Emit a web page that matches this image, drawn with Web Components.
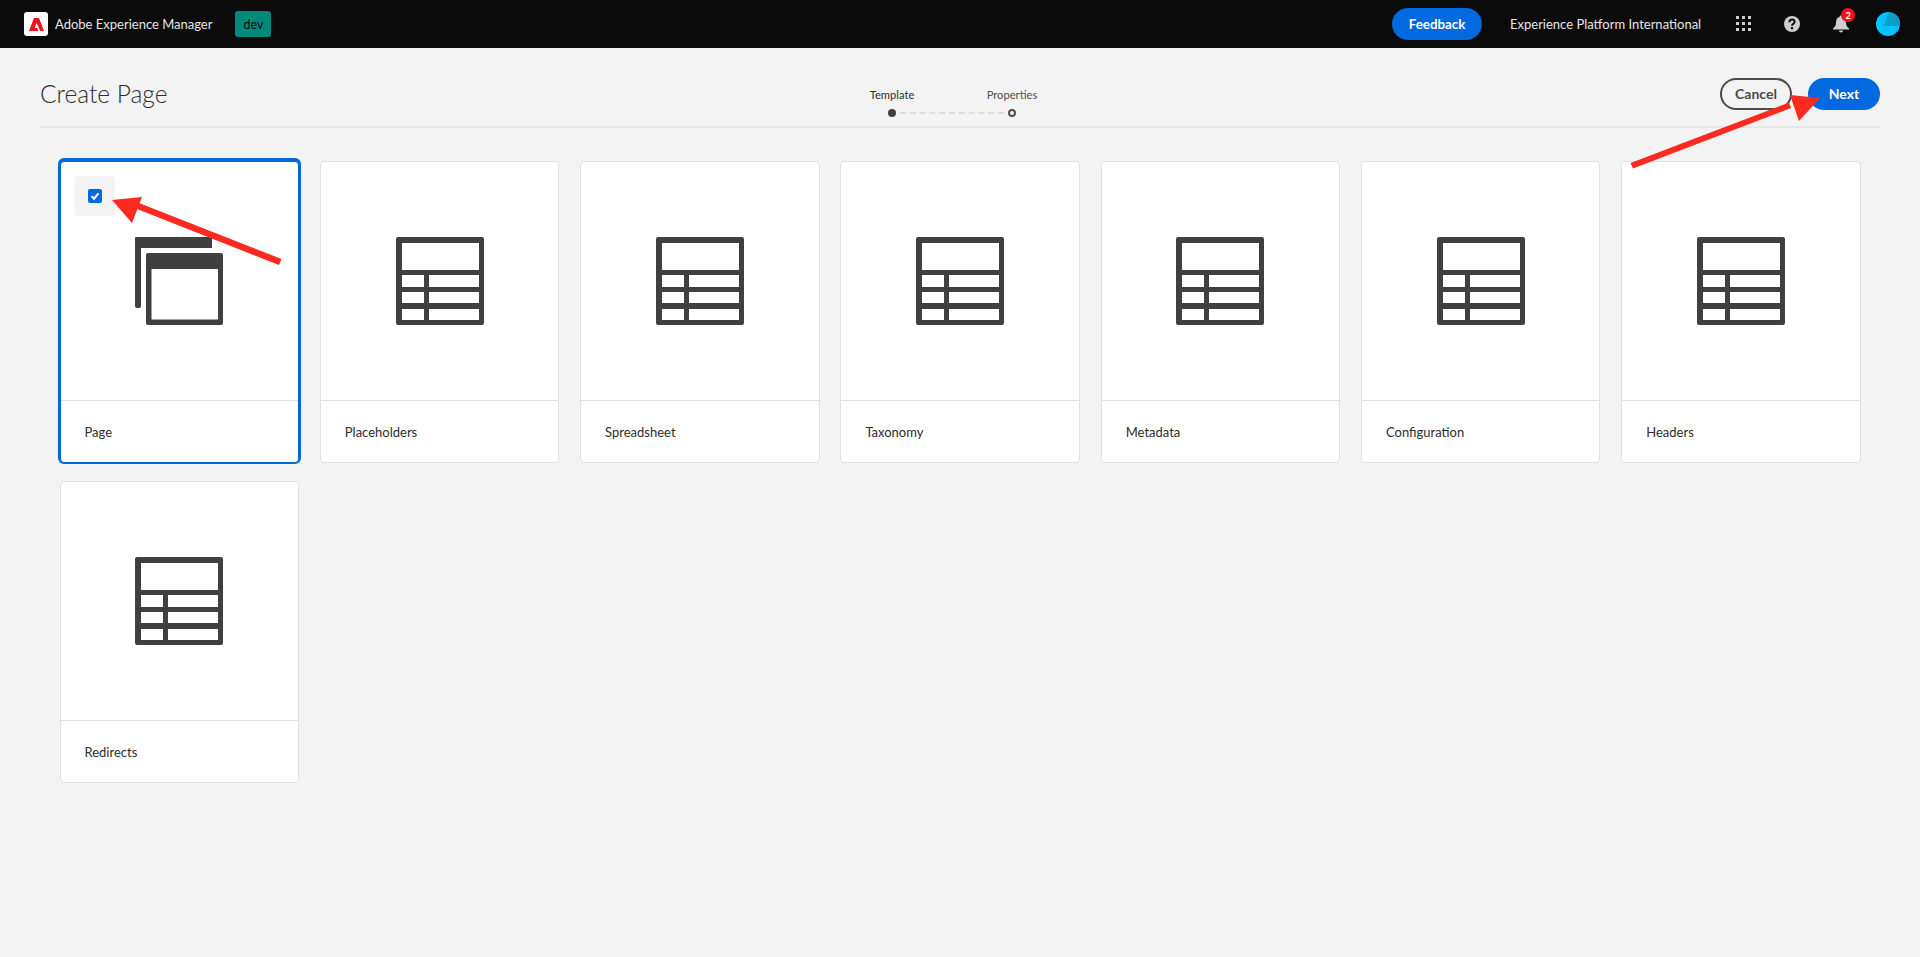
<!DOCTYPE html>
<html lang="en">
<head>
<meta charset="utf-8">
<title>Create Page</title>
<style>
  html, body { margin: 0; padding: 0; height: 100%; background: #f3f3f3; }
  body { font-family: Lato, "Open Sans", sans-serif; overflow: hidden; }
</style>
</head>
<body>

<template id="top-bar-tpl">
  <style>
    :host { display: flex; align-items: center; height: 48px; background: #0b0b0b; color: #e6e6e6; font-size: 13px; white-space: nowrap; }
    .logo { width: 24px; height: 24px; margin-left: 24px; background: #fff; border-radius: 3px; display: flex; align-items: center; justify-content: center; }
    .brand { margin-left: 7px; }
    .env { margin-left: 23px; width: 36px; height: 26px; background: #00897b; border-radius: 3px; color: #0b0b0b; display: flex; align-items: center; justify-content: center; font-size: 12.5px; }
    .spacer { flex: 1; }
    .feedback { width: 90px; height: 32px; background: #0069e0; color: #fff; border-radius: 16px; display: flex; align-items: center; justify-content: center; font-weight: 700; font-size: 13.300px; }
    .org { margin-left: 28px; width: 195px; }
    .apps { margin-left: 31px; width: 16px; height: 16px; }
    .help { margin-left: 32px; width: 16px; height: 16px; }
    .bell-wrap { margin-left: 33px; width: 16px; height: 18px; position: relative; }
    .badge { position: absolute; left: 8px; top: -7px; width: 14px; height: 14px; border-radius: 50%; background: #f01120; color: #fff; font-size: 9px; font-weight: 700; display: flex; align-items: center; justify-content: center; }
    .avatar { margin-left: 27px; margin-right: 20px; width: 24px; height: 24px; }
    svg { display: block; }
  </style>
  <div class="logo">
    <svg width="15" height="13" viewBox="0 0 30 26"><path fill="#f01120" d="M9.900 0H20L30 26H22.500L15.300 9.900L11.300 19.800H16.600L19 26H0Z"/></svg>
  </div>
  <span class="brand">Adobe Experience Manager</span>
  <span class="env">dev</span>
  <span class="spacer"></span>
  <span class="feedback">Feedback</span>
  <span class="org">Experience Platform International</span>
  <svg class="apps" viewBox="0 0 16 16" fill="#d0d0d0">
    <rect x="0" y="0" width="3" height="3"/><rect x="6" y="0" width="3" height="3"/><rect x="12" y="0" width="3" height="3"/>
    <rect x="0" y="6" width="3" height="3"/><rect x="6" y="6" width="3" height="3"/><rect x="12" y="6" width="3" height="3"/>
    <rect x="0" y="12" width="3" height="3"/><rect x="6" y="12" width="3" height="3"/><rect x="12" y="12" width="3" height="3"/>
  </svg>
  <svg class="help" viewBox="0 0 16 16">
    <circle cx="8" cy="8" r="8" fill="#cfcfcf"/>
    <path fill="none" stroke="#0b0b0b" stroke-width="2" d="M5.400 6.200C5.400 4.600 6.600 3.600 8 3.600s2.600 1 2.600 2.400C10.600 7.800 8 7.800 8 9.800"/>
    <rect x="6.900" y="11" width="2.200" height="2.200" fill="#0b0b0b"/>
  </svg>
  <div class="bell-wrap">
    <svg width="16" height="18" viewBox="0 0 16 18" fill="#cfcfcf">
      <path d="M8 0.500C9 0.500 9.500 1.200 9.500 2C12 2.800 13 5 13 7.500C13 10.500 14 12 16 13.500V14.500H0V13.500C2 12 3 10.500 3 7.500C3 5 4 2.800 6.500 2C6.500 1.200 7 0.500 8 0.500Z"/>
      <path d="M6 15.500H10C10 16.800 9 17.500 8 17.500S6 16.800 6 15.500Z"/>
    </svg>
    <span class="badge">2</span>
  </div>
  <svg class="avatar" viewBox="0 0 24 24">
    <circle cx="12" cy="12" r="12" fill="#00c4ff"/>
    <path fill="#0a9cc4" d="M13 0.100A12 12 0 0 1 24 14H7.500Z"/>
  </svg>
</template>

<template id="wizard-stepper-tpl">
  <style>
    :host { display: block; width: 240px; font-size: 11.200px; color: #505050; }
    .labels { display: flex; }
    .labels span { width: 120px; text-align: center; line-height: 16px; }
    .labels .on { color: #2c2c2c; }
    .track { display: flex; align-items: center; margin: 6px 56px 0; }
    .dot { width: 8px; height: 8px; border-radius: 50%; background: #404040; flex: none; }
    .ring { width: 8px; height: 8px; border-radius: 50%; border: 2px solid #505050; box-sizing: border-box; background: #f3f3f3; flex: none; }
    .dash { flex: 1; margin: 0 4px; border-top: 2px dashed #dcdcdc; }
  </style>
  <div class="labels"><span class="on">Template</span><span>Properties</span></div>
  <div class="track"><span class="dot"></span><span class="dash"></span><span class="ring"></span></div>
</template>

<template id="page-header-tpl">
  <style>
    :host { display: grid; grid-template-columns: 792px 240px 1fr; align-items: start; height: 80px; margin: 0 40px; border-bottom: 2px solid #e6e6e6; box-sizing: border-box; }
    h1 { margin: 28px 0 0; font-size: 24.500px; font-weight: 300; line-height: 36px; color: #2c2c2c; }
    wizard-stepper { margin-top: 39px; }
    .actions { display: flex; justify-content: flex-end; gap: 16px; margin-top: 30px; }
    .btn { height: 32px; border-radius: 16px; box-sizing: border-box; display: flex; align-items: center; justify-content: center; font-size: 14px; font-weight: 700; padding-bottom: 2px; }
    .cancel { width: 72px; border: 2px solid #4b4b4b; color: #4b4b4b; }
    .next { width: 72px; background: #0069e0; color: #fff; }
  </style>
  <h1>Create Page</h1>
  <wizard-stepper></wizard-stepper>
  <div class="actions"><span class="btn cancel">Cancel</span><span class="btn next">Next</span></div>
</template>

<template id="template-card-tpl">
  <style>
    :host { display: flex; flex-direction: column; box-sizing: border-box; background: #fff; border: 1px solid #e1e1e1; border-radius: 4px; color: #2c2c2c; position: relative; }
    :host([selected]) { border-color: #0069e0; box-shadow: 0 -1px 0 2px #0069e0; }
    .preview { height: 239px; display: flex; align-items: center; justify-content: center; border-bottom: 1px solid #e1e1e1; flex: none; box-sizing: border-box; }
    .label { flex: 1; display: flex; align-items: center; padding-left: 24px; font-size: 13px; }
    .check { display: none; position: absolute; left: 14.500px; top: 14px; width: 40px; height: 40px; background: #f3f3f3; border-radius: 4px; align-items: center; justify-content: center; }
    :host([selected]) .check { display: flex; }
    .box { width: 14px; height: 14px; background: #0069e0; border-radius: 2px; display: flex; }
  </style>
  <div class="preview"><slot name="icon"></slot></div>
  <div class="label"><slot></slot></div>
  <div class="check"><span class="box"><svg width="14" height="14" viewBox="0 0 14 14"><path fill="none" stroke="#fff" stroke-width="2" d="M3.500 7.200L6 9.700L10.500 4.300"/></svg></span></div>
</template>

<template id="table-icon-tpl">
  <style>:host { display: block; width: 88px; height: 88px; } svg { display: block; }</style>
  <svg width="88" height="88" viewBox="0 0 88 88">
    <path fill="#404040" fill-rule="evenodd" d="M2 0H86A2 2 0 0 1 88 2V86A2 2 0 0 1 86 88H2A2 2 0 0 1 0 86V2A2 2 0 0 1 2 0Z
      M6 6V33H83V6Z
      M6 38V50H28V38Z M33 38V50H83V38Z
      M6 55V66H28V55Z M33 55V66H83V55Z
      M6 72V83H28V72Z M33 72V83H83V72Z"/>
  </svg>
</template>

<template id="page-icon-tpl">
  <style>:host { display: block; width: 88px; height: 88px; } svg { display: block; }</style>
  <svg width="88" height="88" viewBox="0 0 88 88">
    <path fill="#404040" d="M1 0H77V11H6V69A2 2 0 0 1 4 71H2A2 2 0 0 1 0 69V1A1 1 0 0 1 1 0Z"/>
    <path fill="#404040" fill-rule="evenodd" d="M13 16H86A2 2 0 0 1 88 18V86A2 2 0 0 1 86 88H13A2 2 0 0 1 11 86V18A2 2 0 0 1 13 16Z M16.500 32V82.500H83V32Z"/>
  </svg>
</template>

<template id="arrow-layer-tpl">
  <style>:host { position: absolute; left: 0; top: 0; width: 1920px; height: 957px; pointer-events: none; } svg { display: block; }</style>
  <svg width="1920" height="957" viewBox="0 0 1920 957" fill="#ff2a1f">
    <path d="M281.500 259L279 265L137 209L139 203Z"/>
    <path d="M112 200L142 197L132 223Z"/>
    <path d="M1630.500 163L1633 168.500L1791 108L1789 102.500Z"/>
    <path d="M1820 98L1790 95L1799 121Z"/>
  </svg>
</template>

<template id="card-grid-tpl">
  <style>
    :host { display: grid; grid-template-columns: repeat(7, 239.500px); grid-auto-rows: 302px; column-gap: 20.800px; row-gap: 18px; padding: 33px 0 0 59.500px; }
  </style>
  <slot></slot>
</template>

<top-bar></top-bar>
<page-header></page-header>
<card-grid>
  <template-card selected><page-icon slot="icon"></page-icon>Page</template-card>
  <template-card><table-icon slot="icon"></table-icon>Placeholders</template-card>
  <template-card><table-icon slot="icon"></table-icon>Spreadsheet</template-card>
  <template-card><table-icon slot="icon"></table-icon>Taxonomy</template-card>
  <template-card><table-icon slot="icon"></table-icon>Metadata</template-card>
  <template-card><table-icon slot="icon"></table-icon>Configuration</template-card>
  <template-card><table-icon slot="icon"></table-icon>Headers</template-card>
  <template-card><table-icon slot="icon"></table-icon>Redirects</template-card>
</card-grid>
<arrow-layer></arrow-layer>

<script>
  //общий класс: клонирую шаблон в открытый shadow root
  class TplElement extends HTMLElement {
    connectedCallback() {
      if (this.shadowRoot) return;
      const tpl = document.getElementById(this.localName + '-tpl');
      this.attachShadow({ mode: 'open' }).appendChild(tpl.content.cloneNode(true));
    }
  }

  ['top-bar', 'wizard-stepper', 'page-header', 'template-card', 'table-icon', 'page-icon', 'arrow-layer', 'card-grid']
    .forEach((name) => customElements.define(name, class extends TplElement {}));
</script>
</body>
</html>
